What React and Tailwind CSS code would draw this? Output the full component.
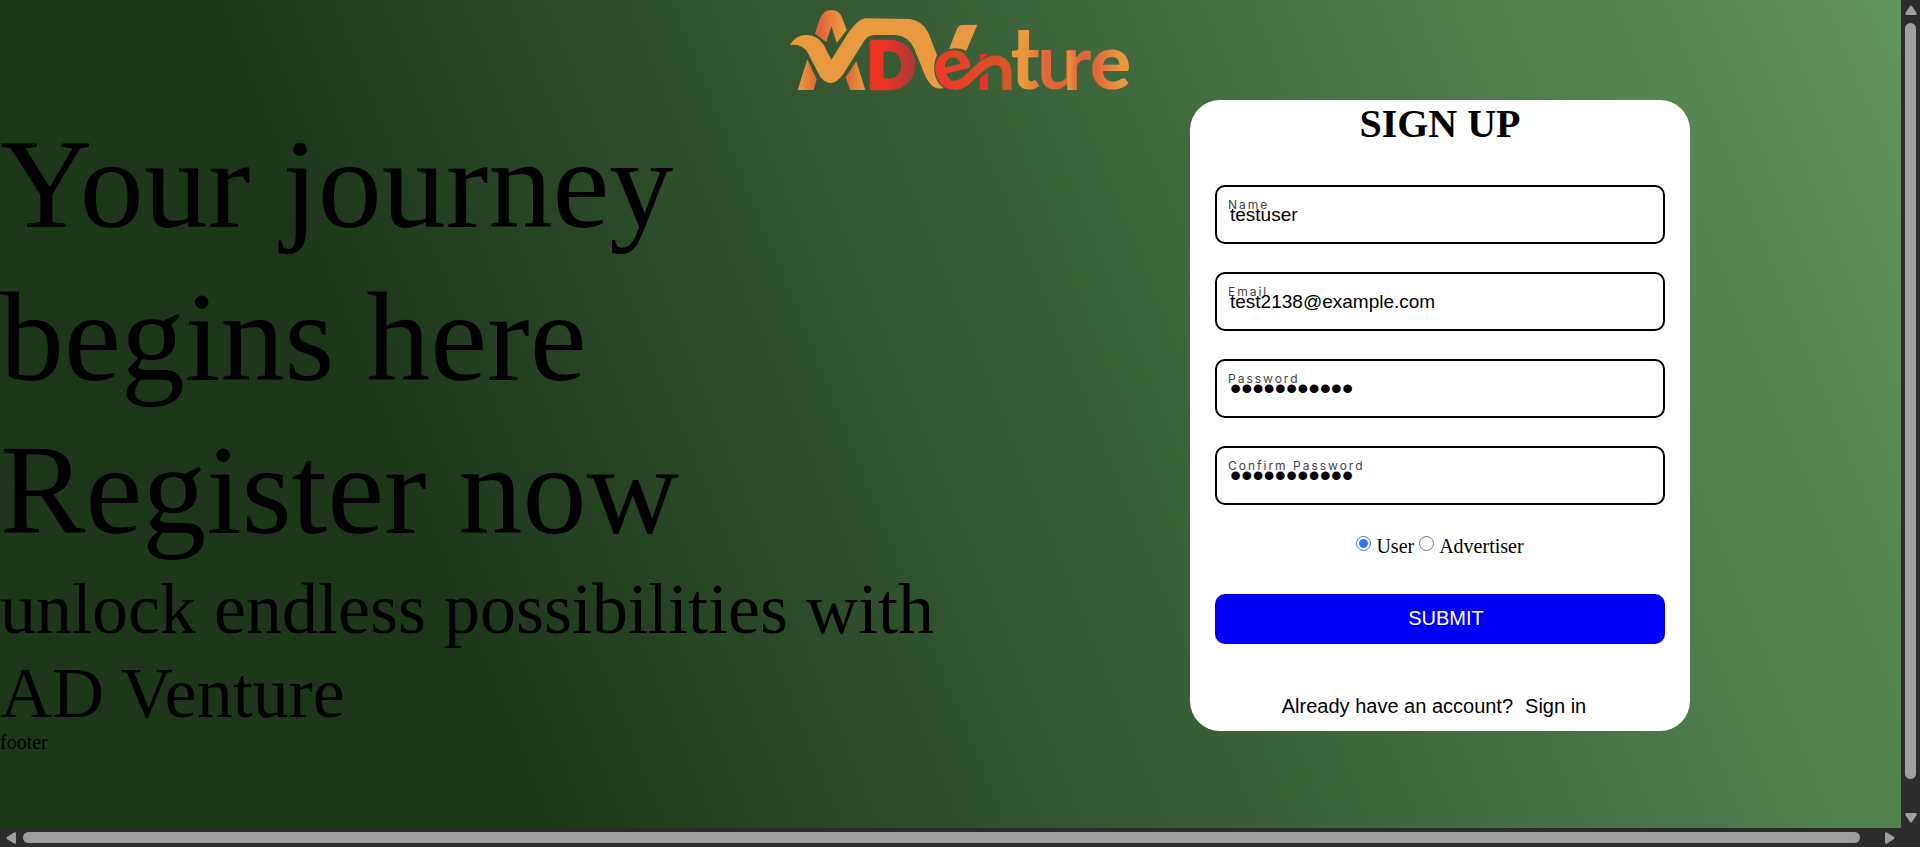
import React from "react";

const fields = [
  { id: "name", label: "Name", type: "text", value: "testuser" },
  { id: "email", label: "Email", type: "email", value: "test2138@example.com" },
  { id: "password", label: "Password", type: "password", value: "testpass123" },
  { id: "confirm", label: "Confirm Password", type: "password", value: "testpass123" },
];

function Logo() {
  return (
    <svg viewBox="0 0 1080 300" className="h-[100px] w-[360px] overflow-visible" role="img" aria-label="AD Venture">
      <defs>
        <linearGradient id="peak" x1="105" x2="200" y1="0" y2="0" gradientUnits="userSpaceOnUse">
          <stop offset="0.2" stopColor="#e0663a" />
          <stop offset="0.8" stopColor="#e9993f" />
        </linearGradient>
        <linearGradient id="footL" x1="60" x2="108" y1="0" y2="0" gradientUnits="userSpaceOnUse">
          <stop offset="0" stopColor="#e9993f" />
          <stop offset="1" stopColor="#e0663a" />
        </linearGradient>
        <linearGradient id="footR" x1="200" x2="250" y1="0" y2="0" gradientUnits="userSpaceOnUse">
          <stop offset="0" stopColor="#e0663a" />
          <stop offset="1" stopColor="#e9993f" />
        </linearGradient>
        <linearGradient id="dee" x1="310" x2="412" y1="0" y2="0" gradientUnits="userSpaceOnUse">
          <stop offset="0" stopColor="#ec3323" />
          <stop offset="1" stopColor="#a83a38" />
        </linearGradient>
        <linearGradient id="wave" x1="480" x2="690" y1="0" y2="0" gradientUnits="userSpaceOnUse">
          <stop offset="0" stopColor="#ec3a28" />
          <stop offset="1" stopColor="#d95426" />
        </linearGradient>
        <linearGradient id="tee" x1="730" x2="850" y1="0" y2="0" gradientUnits="userSpaceOnUse">
          <stop offset="0" stopColor="#e9993f" />
          <stop offset="0.6" stopColor="#e0663a" />
          <stop offset="1" stopColor="#e0663a" />
        </linearGradient>
        <linearGradient id="are" x1="862" x2="935" y1="0" y2="0" gradientUnits="userSpaceOnUse">
          <stop offset="0" stopColor="#e9993f" />
          <stop offset="0.45" stopColor="#e0663a" />
          <stop offset="1" stopColor="#e0663a" />
        </linearGradient>
        <linearGradient id="end" x1="950" x2="1040" y1="0" y2="0" gradientUnits="userSpaceOnUse">
          <stop offset="0" stopColor="#e0663a" />
          <stop offset="0.8" stopColor="#e9993f" />
        </linearGradient>
      </defs>
      <path fill="url(#peak)" d="M105 101 L119 58 Q130 30 153 30 Q180 30 188 58 L200 90 L170 129 L154 79 L139 126 Z" />
      <path fill="url(#footL)" d="M53 270 L82 178 L110 238 L101 270 Z" />
      <path fill="url(#footR)" d="M229 184 L256 270 L210 270 L197 232 Z" />
      <path
        fill="#e9993f"
        d="M30 135 Q48 105 76 105 Q112 104 131 134 L154 179 L204 100 Q236 55 258 55 L388 57 Q424 60 445 98 L471 165 Q459 190 464 222 Q470 250 491 264 Q470 270 455 256 Q438 240 425 200 L402 145 Q384 107 345 105 L283 105 Q264 105 252 124 L190 222 Q170 250 150 249 Q131 248 118 226 L84 160 Q68 130 30 135 Z"
      />
      <path fill="#e9993f" d="M507 147 L531 86 Q536 75 548 75 L592 74 L559 152 Q533 141 507 147 Z" />
      <text x="261" y="264" fontFamily="Lato, sans-serif" fontWeight="900" fontSize="190" fill="url(#dee)" stroke="url(#dee)" strokeWidth="13" strokeLinejoin="round">D</text>
      <text x="460" y="267" fontFamily="Lato, sans-serif" fontWeight="900" fontSize="222" fill="url(#wave)" transform="rotate(-14 522 210)">e</text>
      <path fill="#ee3124" d="M600 162 L624 162 L600 182 Z M600 234 L624 216 L624 270 L598 270 Z" />
      <path fill="none" stroke="url(#wave)" strokeWidth="28" d="M520 256 C560 256 580 215 610 195 C650 168 681 182 681 222 L681 270" />
      <path fill="#e9993f" d="M715 90 H747 V160 H715 Z" />
      <text x="692" y="268" fontFamily="Lato, sans-serif" fontWeight="900" fontSize="230" fill="url(#tee)">t</text>
      <text x="772" y="268" fontFamily="Lato, sans-serif" fontWeight="700" fontSize="230" fill="url(#tee)">u</text>
      <text x="848" y="270" fontFamily="Lato, sans-serif" fontWeight="700" fontSize="230" fill="url(#are)">r</text>
      <text x="930" y="268" fontFamily="Lato, sans-serif" fontWeight="900" fontSize="230" fill="url(#end)">e</text>
    </svg>
  );
}

function Field({ id, label, type, value }) {
  const size = type === "password" ? "text-[32px]" : "text-[19px]";
  return (
    <div className="relative">
      <label
        htmlFor={id}
        className="absolute top-3.5 left-[13px] font-[Inter,sans-serif] text-[12px] leading-[12px] tracking-[2px] text-[#444]"
      >
        {label}
      </label>
      <input
        id={id}
        type={type}
        defaultValue={value}
        className={`relative block h-[59px] w-full rounded-[10px] border-2 border-black bg-transparent px-[13px] font-['Liberation_Sans',Arial,sans-serif] text-black outline-none ${size}`}
      />
    </div>
  );
}

function SignUpCard() {
  return (
    <form
      onSubmit={(e) => e.preventDefault()}
      className="w-[500px] self-start rounded-[30px] bg-white px-[25px] pb-[10px] text-black"
    >
      <h2 className="text-center text-[40px] leading-[48px] font-bold">SIGN UP</h2>
      <div className="mt-[37px] flex flex-col gap-7">
        {fields.map((f) => (
          <Field key={f.id} {...f} />
        ))}
      </div>
      <div className="mt-[30px] flex justify-center gap-[5px] text-[20px] leading-[23px]">
        <label className="flex gap-[5px]">
          <input type="radio" name="role" defaultChecked className="mt-px size-[15px] accent-[#3375f6]" />
          User
        </label>
        <label className="flex gap-[5px]">
          <input type="radio" name="role" className="mt-px size-[15px] accent-[#3375f6]" />
          Advertiser
        </label>
      </div>
      <button
        type="submit"
        className="mt-9 block h-[50px] w-full rounded-[10px] bg-[#0000fa] pb-0.5 pl-3 font-['Liberation_Sans',Arial,sans-serif] text-[20px] text-white"
      >
        SUBMIT
      </button>
      <p className="mt-[47px] flex justify-center gap-3 pr-3 font-['Liberation_Sans',Arial,sans-serif] text-[20px] leading-[30px]">
        <span>Already have an account?</span>
        <a href="#signin">Sign in</a>
      </p>
    </form>
  );
}

function Arrow({ className }) {
  return (
    <svg viewBox="0 0 12 10" className={`h-[10px] w-[12px] shrink-0 fill-[#9f9f9f] ${className}`} aria-hidden="true">
      <path d="M5 1 Q6 0 7 1 L11.6 8 Q12 10 10.5 10 L1.5 10 Q0 10 0.4 8 Z" />
    </svg>
  );
}

export default function App() {
  return (
    <div className="grid h-screen grid-cols-[minmax(0,1fr)_19px] grid-rows-[minmax(0,1fr)_19px] bg-[#2c2c2c] font-['Liberation_Serif','Times_New_Roman',serif] text-black">
      <div className="overflow-hidden bg-[linear-gradient(68deg,#1e371b_24%,#5f955f_100%)]">
        <div className="w-screen">
          <header className="flex h-[100px] justify-center">
            <Logo />
          </header>
          <main className="grid grid-cols-2">
            <section className="-mb-1 pt-2">
              <h1 className="text-[128px] leading-[153px]">
                Your journey
                <br />
                begins here
                <br />
                Register now
              </h1>
              <p className="text-[72px] leading-[84px]">unlock endless possibilities with AD Venture</p>
            </section>
            <div className="flex justify-center">
              <SignUpCard />
            </div>
          </main>
          <footer className="text-[20px] leading-[23px]">footer</footer>
        </div>
      </div>
      <div className="flex flex-col items-center justify-between py-[5px]" aria-hidden="true">
        <Arrow className="" />
        <div className="my-2 w-[11px] flex-1">
          <div className="h-[calc(100%-26px)] rounded-full bg-[#9f9f9f]" />
        </div>
        <Arrow className="rotate-180" />
      </div>
      <div className="flex items-center px-[5px]" aria-hidden="true">
        <Arrow className="-rotate-90" />
        <div className="mr-2 ml-1.5 h-[11px] flex-1">
          <div className="h-full w-[calc(100%-16px)] rounded-full bg-[#9f9f9f]" />
        </div>
        <Arrow className="rotate-90" />
      </div>
    </div>
  );
}
